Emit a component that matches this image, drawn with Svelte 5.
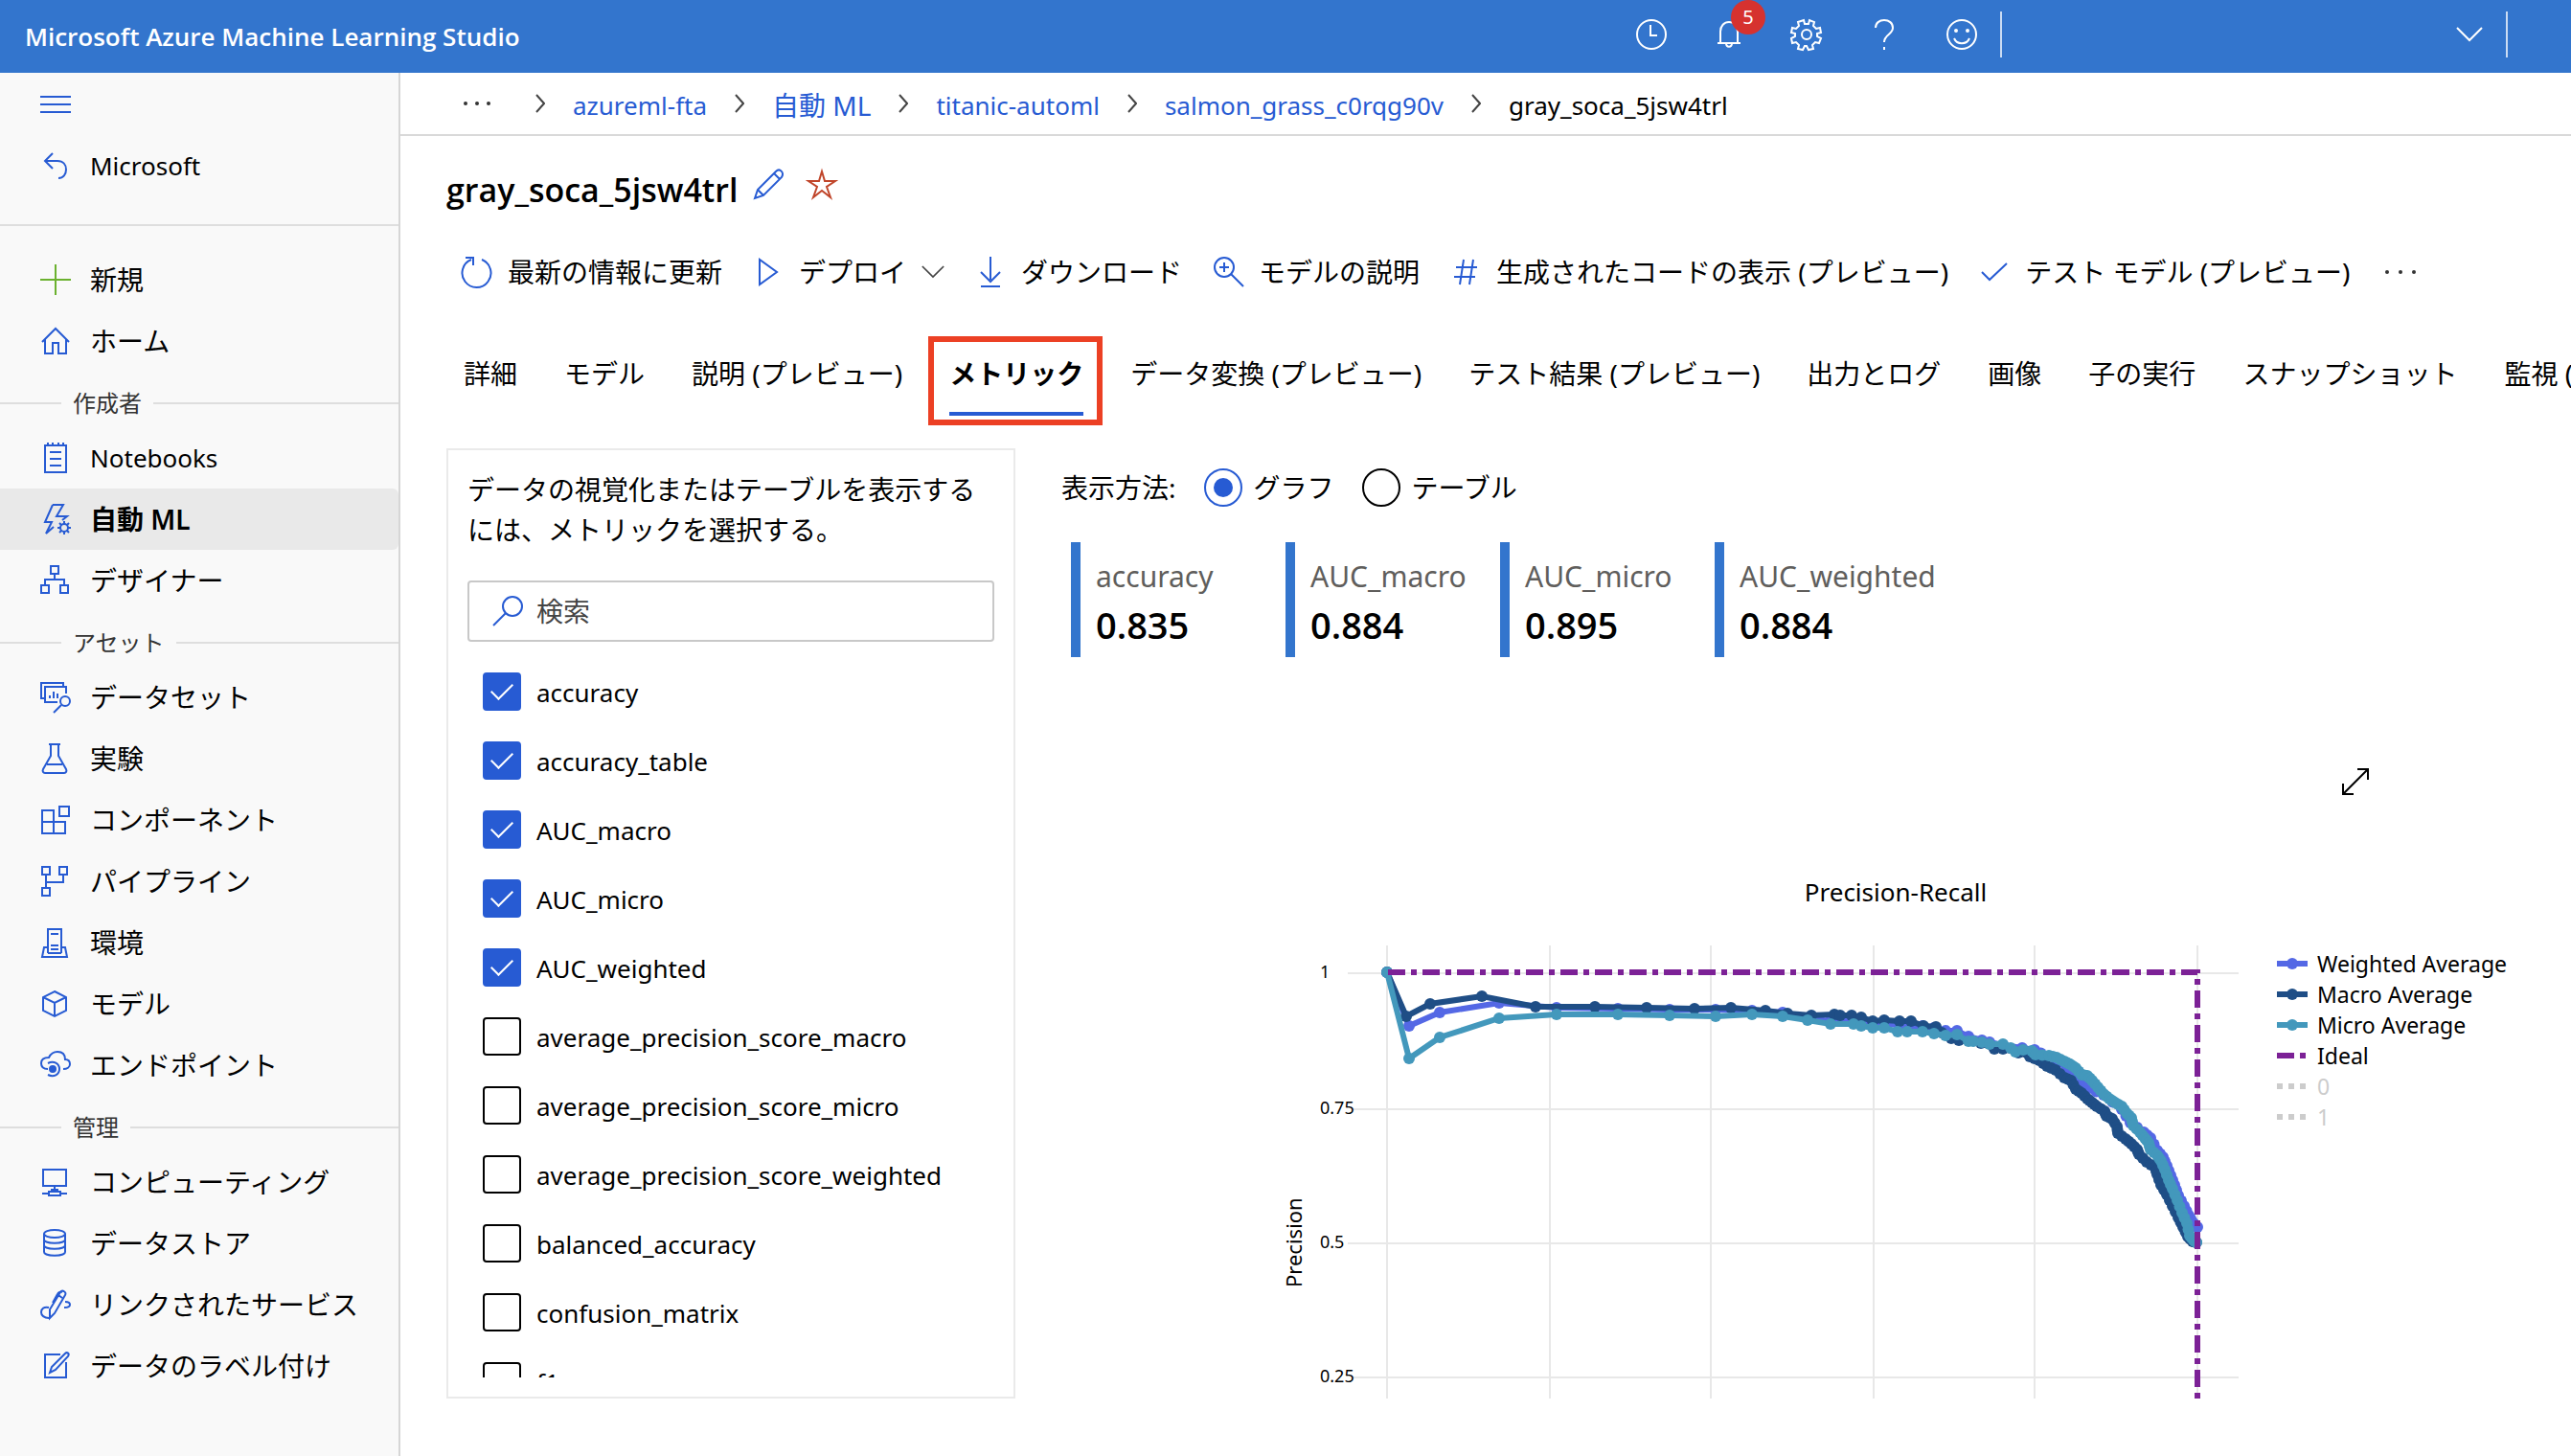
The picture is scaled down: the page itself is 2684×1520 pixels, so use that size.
<script lang="ts">
  type NavItem = { label: string; icon: string; latin?: boolean };

  const groups: { title?: string; items: NavItem[] }[] = [
    { items: [{ label: '新規', icon: 'plus' }, { label: 'ホーム', icon: 'home' }] },
    {
      title: '作成者',
      items: [
        { label: 'Notebooks', icon: 'notebook', latin: true },
        { label: '自動 ML', icon: 'automl' },
        { label: 'デザイナー', icon: 'designer' },
      ],
    },
    {
      title: 'アセット',
      items: [
        { label: 'データセット', icon: 'dataset' },
        { label: '実験', icon: 'flask' },
        { label: 'コンポーネント', icon: 'component' },
        { label: 'パイプライン', icon: 'pipeline' },
        { label: '環境', icon: 'environment' },
        { label: 'モデル', icon: 'cube' },
        { label: 'エンドポイント', icon: 'endpoint' },
      ],
    },
    {
      title: '管理',
      items: [
        { label: 'コンピューティング', icon: 'compute' },
        { label: 'データストア', icon: 'datastore' },
        { label: 'リンクされたサービス', icon: 'linked' },
        { label: 'データのラベル付け', icon: 'labeling' },
      ],
    },
  ];
  const current = '自動 ML';

  const crumbs = [
    { label: 'azureml-fta' },
    { label: '自動 ML', cjk: true },
    { label: 'titanic-automl' },
    { label: 'salmon_grass_c0rqg90v' },
  ];

  const commands = [
    { label: '最新の情報に更新', icon: 'refresh' },
    { label: 'デプロイ', icon: 'play', menu: true },
    { label: 'ダウンロード', icon: 'download' },
    { label: 'モデルの説明', icon: 'zoomin' },
    { label: '生成されたコードの表示 (プレビュー)', icon: 'hash' },
    { label: 'テスト モデル (プレビュー)', icon: 'check' },
  ];

  const tabs = [
    '詳細', 'モデル', '説明 (プレビュー)', 'メトリック', 'データ変換 (プレビュー)',
    'テスト結果 (プレビュー)', '出力とログ', '画像', '子の実行', 'スナップショット', '監視 (プレビュー)',
  ];
  const activeTab = 'メトリック';

  let metrics = $state([
    { name: 'accuracy', on: true },
    { name: 'accuracy_table', on: true },
    { name: 'AUC_macro', on: true },
    { name: 'AUC_micro', on: true },
    { name: 'AUC_weighted', on: true },
    { name: 'average_precision_score_macro', on: false },
    { name: 'average_precision_score_micro', on: false },
    { name: 'average_precision_score_weighted', on: false },
    { name: 'balanced_accuracy', on: false },
    { name: 'confusion_matrix', on: false },
    { name: 'f1_score_macro', on: false },
  ]);
  let view = $state('chart');

  const scores = [
    { name: 'accuracy', value: '0.835' },
    { name: 'AUC_macro', value: '0.884' },
    { name: 'AUC_micro', value: '0.895' },
    { name: 'AUC_weighted', value: '0.884' },
  ];

  const icons: Record<string, string> = {
    plus: '<path d="M16 0v32M0 16h32"/>',
    back: '<path d="M13 3 5 11l8 8M5 11h13c6 0 9 4 9 9s-3 9-8 9"/>',
    home: '<path d="M2 17 16 3l14 14M5 14v15h8V18h6v11h8V14"/>',
    notebook: '<path d="M5 3h22v28H5zM8 0v4M13 0v4M19 0v4M24 0v4M10 10h12M10 17h12M10 24h12"/>',
    automl: '<path d="M13 1h11l-7 12h11l-5 4M13 1 5 19h7L6 31l8-7"/><circle cx="25" cy="25" r="4"/><path d="M25 18v3M25 29v3M18 25h3M29 25h3M20 20l2 2M28 28l2 2M30 20l-2 2M22 28l-2 2"/>',
    designer: '<path d="M11 1h8v8h-8zM1 21h8v8H1zM21 21h8v8h-8zM15 9v6M5 21v-6h20v6"/>',
    dataset: '<path d="M24 4V1H1v16h3M18 21H5V5h22v7M10 17v-3M14 17v-7M18 17v-5"/><circle cx="26" cy="20" r="5"/><path d="m22 24-8 8"/>',
    flask: '<path d="M9 1h12M11 1v12L3 27c-1 2 0 4 2 4h20c2 0 3-2 2-4l-8-14V1M7 22h16"/>',
    component: '<path d="M2 6h12v24H2zM2 18h24v12H14M20 2h10v10H20z"/>',
    pipeline: '<path d="M2 1h8v8H2zM20 1h8v8h-8zM2 23h8v8H2zM6 9v14M6 17h18V9"/>',
    environment: '<path d="M8 27V2h14v25M11 7h8M11 19h8M11 23h8M8 21H4L2 31h26l-2-10h-4M8 27h14"/>',
    cube: '<path d="m15 3 12 6v14l-12 6-12-6V9zM3 9l12 6 12-6M15 15v14"/>',
    endpoint: '<path d="M8 20C4 20 1 18 1 14s3-6 8-6c2-4 5-6 9-6 5 0 8 3 8 8 3 0 5 2 5 5s-3 5-7 5"/><path d="M8 14c6-3 12 0 12 6s-6 9-12 6"/><circle cx="13" cy="20" r="3" class="solid"/>',
    compute: '<path d="M3 3h24v17H3zM15 20v5M2 28h7M21 28h7M9 26h12v4H9zM12 26v-2h6v2"/>',
    datastore: '<ellipse cx="15" cy="6" rx="11" ry="4"/><path d="M4 6v19c0 5 22 5 22 0V6M4 12c0 5 22 5 22 0M4 18c0 5 22 5 22 0"/>',
    linked: '<path d="M10 21 21 3c2-3 7 0 5 3L15 25l-5 5zM19 6l4 3M13 14l5-9c1-2 3-3 5-2M9 19c-5-1-8 1-8 5 0 3 3 6 8 6M26 13c4 0 5 2 5 3s-1 3-6 3"/>',
    labeling: '<path d="M21 4H5v24h22V12M10 23l2-6L26 3c2-2 5 0 3 3L16 20z"/>',
    refresh: '<path d="M21 3a15 15 0 1 1-11 0M4 1h8v8"/>',
    play: '<path d="M7 3v26l18-13z"/>',
    download: '<path d="M16 0v24M6 16l10 10 10-10M6 31h20"/>',
    zoomin: '<circle cx="12" cy="11" r="10"/><path d="m19 18 13 13M12 6v10M7 11h10"/>',
    hash: '<path d="m14 3-4 26M24 3l-4 26M6 11h22M4 21h22"/>',
    check: '<path d="m3 16 8 8L29 7"/>',
    pencil: '<path d="M1 31l3-9L23 3c4-4 9 1 6 6L10 28zM4 22l6 6M21 5l6 6"/>',
    star: '<path d="m16 3 3 10h11l-9 6 4 11-9-7-9 7 4-11-9-6h11z"/>',
    search: '<circle cx="21" cy="11" r="10"/><path d="M14 18 1 31"/>',
    clock: '<circle cx="16" cy="16" r="15"/><path d="M15 6v11h7"/>',
    bell: '<path d="M4 25h24M7 25V13c0-6 4-10 9-10s9 4 9 10v12M13 25c0 5 6 5 6 0"/>',
    gear: '<circle cx="16" cy="16" r="5"/><path d="m13 1 1 4h4l1-4 5 2-1 4 3 3 4-1 1 5-4 1v3l4 2-2 5-4-1-3 3 1 4-5 1-2-4h-2l-2 4-5-1 1-4-3-3-4 1-1-5 4-2v-3l-4-1 1-5 4 1 3-3-1-4z"/>',
    help: '<path d="M7 9c0-5 4-8 9-8s9 3 9 8c0 7-9 7-9 15M16 29v3"/>',
    smile: '<circle cx="16" cy="16" r="15"/><path d="M8 20c3 7 13 7 16 0"/><circle cx="10" cy="12" r="1" class="solid"/><circle cx="22" cy="12" r="1" class="solid"/>',
    expand: '<path d="M3 29 29 3M18 3h11v11M3 18v11h11"/>',
  };

  const topIcons = [
    { icon: 'clock', label: '履歴' },
    { icon: 'bell', label: '通知', badge: '5' },
    { icon: 'gear', label: '設定' },
    { icon: 'help', label: 'ヘルプ' },
    { icon: 'smile', label: 'フィードバック' },
  ];

  // Curve vertices in plot units; the plot origin (recall 0, precision 1) is 118,35.
  type Point = [number, number];
  const weighted: Point[] = [
    [0,0],[23,56],[55,42],[117,32],[177,37],[241,38],[295,39],[343,39],[381,40],[413,42],[439,48],[463,51],[487,51],[519,53],[543,57],[559,56],[571,58],[583,61],[595,61],[607,67],[621,71],[629,73],[643,76],[663,79],[676,81],[689,88],[710,100],[723,112],[733,121],[748,128],[767,143],[776,157],[790,167],[797,173],[804,186],[810,193],[814,202],[818,212],[822,222],[826,233],[832,244],[837,254],[841,261],[846,266],
  ];
  const macro: Point[] = [
    [0,0],[20,46],[45,33],[99,25],[155,36],[217,36],[271,37],[321,38],[359,37],[395,40],[418,43],[443,45],[467,44],[473,45],[485,45],[495,47],[507,51],[519,50],[535,51],[547,51],[560,56],[573,57],[579,63],[589,69],[597,71],[620,74],[634,80],[643,80],[659,84],[671,88],[681,92],[689,98],[698,102],[707,110],[714,113],[719,122],[725,126],[731,132],[736,136],[741,140],[749,145],[751,150],[757,153],[762,161],[763,168],[771,174],[777,179],[783,185],[785,190],[793,198],[802,204],[804,211],[808,222],[814,232],[820,244],[826,256],[831,266],[836,276],[841,281],[845,282],
  ];
  const micro: Point[] = [
    [0,0],[23,90],[55,68],[117,48],[177,44],[241,44],[295,45],[343,46],[381,44],[413,46],[439,50],[463,54],[487,54],[495,56],[507,58],[519,58],[533,62],[543,62],[559,62],[571,64],[583,66],[595,65],[607,72],[612,72],[621,73],[629,75],[643,75],[651,79],[656,83],[664,81],[673,82],[677,86],[691,87],[699,89],[707,93],[713,96],[719,100],[725,107],[731,108],[736,113],[742,120],[748,127],[754,132],[760,136],[767,140],[772,147],[777,152],[779,160],[786,167],[791,173],[795,178],[797,185],[804,191],[808,197],[812,206],[816,217],[820,226],[825,238],[830,251],[835,262],[838,275],[842,280],[845,282],
  ];
  // Past this recall position the samples are twice as dense.
  const denseFrom = 670;
  const densify = (points: Point[]): Point[] =>
    points.flatMap(([x, y], i) => {
      const next = points[i + 1];
      if (!next || x < denseFrom) return [[x, y]] as Point[];
      return [[x, y], [(x + next[0]) / 2, (y + next[1]) / 2]] as Point[];
    });
  const series = [
    { name: 'Weighted Average', cls: 'weighted', points: densify(weighted) },
    { name: 'Macro Average', cls: 'macro', points: densify(macro) },
    { name: 'Micro Average', cls: 'micro', points: densify(micro) },
  ];
  const columns = [118, 288, 456, 626, 794, 964];
  const ticks = [
    { y: 36, label: '1' },
    { y: 178, label: '0.75' },
    { y: 318, label: '0.5' },
    { y: 458, label: '0.25' },
  ];
  const toLine = (p: Point[]) => p.map(([x, y]) => `${x + 118},${y + 35}`).join(' ');
</script>

{#snippet icon(name: string)}
  <svg class="icon" viewBox="0 0 32 32" aria-hidden="true">{@html icons[name]}</svg>
{/snippet}

<div class="app">
  <header class="topbar">
    <div class="brand">Microsoft Azure Machine Learning Studio</div>
    <div class="actions">
      {#each topIcons as t}
        <button class="action" aria-label={t.label}>
          {@render icon(t.icon)}
          {#if t.badge}<span class="badge">{t.badge}</span>{/if}
        </button>
      {/each}
    </div>
    <button class="account" aria-label="ワークスペース">
      <svg class="chev-down" viewBox="0 0 28 16" aria-hidden="true"><path d="m1 1 13 13L27 1" /></svg>
    </button>
    <div class="corner"></div>
  </header>

  <div class="body">
    <nav class="sidebar">
      <button class="burger" aria-label="メニュー"><span></span><span></span><span></span></button>
      <a class="nav latin" href="#back">{@render icon('back')}Microsoft</a>
      <hr />
      {#each groups as g}
        {#if g.title}<div class="section"><span>{g.title}</span></div>{/if}
        {#each g.items as item}
          <a
            class="nav {item.icon}"
            class:latin={item.latin}
            class:current={item.label === current}
            href="#{item.icon}">{@render icon(item.icon)}{item.label}</a>
        {/each}
      {/each}
    </nav>

    <main>
      <nav class="crumbs">
        <button class="dots" aria-label="その他"><i></i><i></i><i></i></button>
        {#each crumbs as c}
          <svg class="chev-right" viewBox="0 0 10 20" aria-hidden="true"><path d="m1 1 8 9-8 9" /></svg>
          <a class:cjk={c.cjk} href="#{c.label}">{c.label}</a>
        {/each}
        <svg class="chev-right" viewBox="0 0 10 20" aria-hidden="true"><path d="m1 1 8 9-8 9" /></svg>
        <span>gray_soca_5jsw4trl</span>
      </nav>

      <div class="heading">
        <h1>gray_soca_5jsw4trl</h1>
        <button class="edit" aria-label="編集">{@render icon('pencil')}</button>
        <button class="fav" aria-label="お気に入り">{@render icon('star')}</button>
      </div>

      <div class="commands">
        {#each commands as c}
          <button class="command">
            {@render icon(c.icon)}<span>{c.label}</span>
            {#if c.menu}
              <svg class="chev-menu" viewBox="0 0 28 16" aria-hidden="true"><path d="m1 1 13 13L27 1" /></svg>
            {/if}
          </button>
        {/each}
        <button class="dots" aria-label="その他のコマンド"><i></i><i></i><i></i></button>
      </div>

      <div class="tabs" role="tablist">
        {#each tabs as t}
          <button role="tab" class="tab" class:active={t === activeTab} aria-selected={t === activeTab}>{t}</button>
        {/each}
      </div>

      <div class="content">
        <section class="panel">
          <p>データの視覚化またはテーブルを表示するには、メトリックを選択する。</p>
          <label class="search">
            {@render icon('search')}
            <input type="text" placeholder="検索" aria-label="検索" />
          </label>
          <div class="list">
            {#each metrics as m}
              <label class="metric"><input type="checkbox" bind:checked={m.on} /><span>{m.name}</span></label>
            {/each}
          </div>
        </section>

        <section class="results">
          <div class="views" role="radiogroup" aria-label="表示方法">
            <span>表示方法:</span>
            <label><input type="radio" name="view" value="chart" bind:group={view} />グラフ</label>
            <label><input type="radio" name="view" value="table" bind:group={view} />テーブル</label>
          </div>

          <div class="scores">
            {#each scores as s}
              <div class="score"><span>{s.name}</span><strong>{s.value}</strong></div>
            {/each}
          </div>

          <figure>
            <button class="expand" aria-label="拡大">{@render icon('expand')}</button>
            <figcaption>Precision-Recall</figcaption>
            <div class="chart">
              <svg class="plot" viewBox="0 0 1010 480" role="img" aria-label="Precision-Recall">
                {#each columns as x}<path class="grid" d="M{x} 7V480" />{/each}
                {#each ticks as t}
                  <path class="grid" d="M{t.label.length > 3 ? 82 : 77} {t.y}H1007" />
                  <text class="tick" x="48" y={t.y + 5}>{t.label}</text>
                {/each}
                <text class="axis" transform="translate(29 364) rotate(-90)">Precision</text>
                {#each series as s}
                  <g class={s.cls}>
                    <polyline points={toLine(s.points)} />
                    {#each s.points as [x, y]}<circle cx={x + 118} cy={y + 35} r="6" />{/each}
                  </g>
                {/each}
                <path class="ideal" d="M119 35H964V480" />
              </svg>
              <ul class="legend">
                {#each series as s}
                  <li class={s.cls}>
                    <svg viewBox="0 0 32 16" aria-hidden="true"><path d="M0 8h32" /><circle cx="16" cy="8" r="6" /></svg>{s.name}
                  </li>
                {/each}
                <li><svg viewBox="0 0 32 16" aria-hidden="true"><path class="ideal" d="M0 8h32" /></svg>Ideal</li>
                <li class="off"><svg viewBox="0 0 32 16" aria-hidden="true"><path d="M0 8h32" /></svg>0</li>
                <li class="off"><svg viewBox="0 0 32 16" aria-hidden="true"><path d="M0 8h32" /></svg>1</li>
              </ul>
            </div>
          </figure>
        </section>
      </div>
    </main>
  </div>
</div>

<style>
  :global(body) {
    margin: 0;
    background: #fff;
  }
  .app {
    --blue: #275bd3;
    --bar: #3375cd;
    display: flex;
    flex-direction: column;
    height: 100vh;
    overflow: hidden;
    color: #000;
    font-family: 'Noto Sans', 'Noto Sans CJK JP', sans-serif;
    font-size: 28px;
    line-height: 42px;
  }
  .app * {
    box-sizing: border-box;
  }
  button {
    display: flex;
    align-items: center;
    padding: 0;
    border: 0;
    background: none;
    color: inherit;
    font: inherit;
    white-space: nowrap;
    flex: none;
  }
  a {
    color: inherit;
    text-decoration: none;
  }
  svg {
    fill: none;
    stroke: currentColor;
    stroke-width: 2;
    flex: none;
  }
  .icon {
    width: 32px;
    height: 32px;
    color: var(--blue);
    overflow: visible;
  }
  .icon :global(.solid) {
    fill: currentColor;
  }

  .topbar {
    display: flex;
    flex: none;
    align-items: center;
    height: 76px;
    padding: 0 0 4px 26px;
    background: var(--bar);
    color: #fff;
  }
  .topbar .icon {
    color: #fff;
  }
  .brand {
    flex: 1;
    padding-top: 4px;
    font-family: 'Open Sans', sans-serif;
    font-size: 26px;
    font-weight: 600;
  }
  .actions {
    display: flex;
  }
  .action {
    position: relative;
    justify-content: center;
    width: 81px;
    height: 72px;
  }
  .badge {
    position: absolute;
    top: 0;
    left: 43px;
    width: 36px;
    height: 36px;
    border-radius: 50%;
    background: #d6322f;
    font-size: 20px;
    line-height: 36px;
    text-align: center;
  }
  .account {
    justify-content: flex-end;
    width: 530px;
    height: 48px;
    padding-right: 24px;
    border: solid rgb(255 255 255 / 75%);
    border-width: 0 2px;
  }
  .chev-down {
    width: 28px;
    height: 16px;
  }
  .corner {
    width: 66px;
  }

  .body {
    display: flex;
    flex: 1;
    min-height: 0;
  }
  .sidebar {
    flex: none;
    width: 418px;
    padding-top: 17px;
    border-right: 2px solid #d6d6d6;
    background: #f9f9f9;
  }
  .burger {
    flex-direction: column;
    gap: 6px;
    width: 116px;
    height: 48px;
    padding-top: 7px;
  }
  .burger span {
    width: 32px;
    height: 2px;
    background: var(--blue);
  }
  .sidebar hr {
    height: 2px;
    margin: 29px 0 24px;
    border: 0;
    background: #dedede;
  }
  .nav {
    display: flex;
    align-items: center;
    gap: 20px;
    height: 64px;
    padding-left: 42px;
    white-space: nowrap;
  }
  .latin {
    font-size: 26px;
  }
  .nav.current {
    border-radius: 0 6px 6px 0;
    background: #e9e9e9;
    font-weight: 600;
  }
  .plus .icon {
    color: #6bb12f;
  }
  .section {
    display: flex;
    align-items: center;
    gap: 12px;
    height: 50px;
    margin-top: 8px;
    color: #333;
    font-size: 24px;
  }
  .section::before,
  .section::after {
    content: '';
    height: 2px;
    background: #dedede;
  }
  .section::before {
    width: 64px;
  }
  .section::after {
    flex: 1;
  }

  main {
    display: flex;
    flex: 1;
    flex-direction: column;
    min-width: 0;
    background: #fff;
  }
  .crumbs {
    display: flex;
    flex: none;
    align-items: center;
    gap: 29px;
    height: 66px;
    padding-left: 66px;
    border-bottom: 2px solid #d9d9d9;
    font-size: 26px;
  }
  .crumbs a,
  .crumbs span {
    padding-top: 4px;
  }
  .crumbs a {
    color: var(--blue);
  }
  .crumbs .cjk {
    font-size: 28px;
  }
  .chev-right {
    width: 10px;
    height: 20px;
    color: #444;
  }
  .dots {
    justify-content: space-between;
    width: 28px;
    height: 32px;
  }
  .dots i {
    width: 4px;
    height: 4px;
    border-radius: 50%;
    background: #333;
  }
  .crumbs .dots {
    margin-right: 18px;
  }
  .heading {
    display: flex;
    align-items: center;
    height: 64px;
    margin-top: 24px;
    padding-left: 48px;
  }
  h1 {
    margin: 0;
    font-family: 'Open Sans', sans-serif;
    font-size: 34px;
    font-weight: 600;
  }
  .heading button {
    padding-bottom: 12px;
  }
  .edit {
    margin: 0 23px 0 17px;
  }
  .fav .icon {
    color: #c0452a;
  }
  .commands {
    display: flex;
    align-items: center;
    gap: 32px;
    height: 64px;
    margin-top: 22px;
    padding-left: 64px;
  }
  .command {
    gap: 16px;
  }
  .commands .dots {
    margin-left: 4px;
    width: 32px;
  }
  .chev-menu {
    width: 24px;
    height: 14px;
    color: #444;
  }
  .tabs {
    display: flex;
    flex: none;
    gap: 49px;
    height: 88px;
    margin-top: 30px;
    padding-left: 66px;
    overflow-x: clip;
  }
  .tab {
    position: relative;
  }
  .tab.active {
    border-bottom: 4px solid var(--blue);
    padding-top: 4px;
    font-weight: 700;
  }
  .tab.active::after {
    content: '';
    position: absolute;
    inset: 5px -20px -14px -22px;
    border: 6px solid #ec4024;
  }

  .content {
    display: flex;
    flex: 1;
    min-height: 0;
    gap: 48px;
    margin-top: 34px;
    padding: 0 42px 60px 48px;
  }
  .panel {
    display: flex;
    flex: none;
    flex-direction: column;
    width: 594px;
    padding: 20px;
    border: 2px solid #eaeaea;
  }
  .panel p {
    margin: 0 0 32px;
  }
  .search {
    display: flex;
    flex: none;
    align-items: center;
    gap: 14px;
    height: 64px;
    padding-left: 24px;
    border: 2px solid #c8c8c8;
    border-radius: 4px;
  }
  .search input {
    flex: 1;
    padding: 0;
    border: 0;
    outline: 0;
    font: inherit;
  }
  .search input::placeholder {
    color: #444;
    opacity: 1;
  }
  .list {
    flex: 1;
    min-height: 0;
    margin-top: 16px;
    overflow: hidden;
  }
  .metric {
    display: flex;
    align-items: center;
    gap: 16px;
    height: 72px;
    padding-left: 16px;
    font-size: 26px;
  }
  .metric span {
    padding-top: 2px;
  }
  .metric input {
    display: grid;
    place-items: center;
    appearance: none;
    width: 40px;
    height: 40px;
    margin: 0;
    border: 2px solid #000;
    border-radius: 4px;
  }
  .metric input:checked {
    border-color: var(--blue);
    background: var(--blue);
  }
  .metric input:checked::before {
    content: '';
    width: 20px;
    height: 10px;
    margin-bottom: 6px;
    border: solid #fff;
    border-width: 0 0 2px 2px;
    rotate: -45deg;
  }

  .results {
    flex: 1;
    min-width: 0;
    display: flex;
    flex-direction: column;
  }
  .views {
    display: flex;
    align-items: center;
    gap: 29px;
    margin-top: 20px;
  }
  .views label {
    display: flex;
    align-items: center;
    gap: 12px;
  }
  .views input {
    display: grid;
    place-items: center;
    appearance: none;
    width: 40px;
    height: 40px;
    margin: 0;
    border: 2px solid #000;
    border-radius: 50%;
  }
  .views input:checked {
    border-color: var(--blue);
  }
  .views input:checked::before {
    content: '';
    width: 20px;
    height: 20px;
    border-radius: 50%;
    background: var(--blue);
  }
  .scores {
    display: flex;
    margin: 36px 0 0 10px;
  }
  .score {
    display: flex;
    flex-direction: column;
    justify-content: center;
    gap: 8px;
    width: 224px;
    height: 120px;
    padding: 2px 0 0 16px;
    border-left: 10px solid var(--bar);
    color: #605e5c;
    font-size: 30px;
    white-space: nowrap;
  }
  .score strong {
    color: #000;
    font-family: 'Open Sans', sans-serif;
    font-size: 38px;
    font-weight: 600;
  }
  figure {
    display: flex;
    flex: 1;
    flex-direction: column;
    min-height: 0;
    margin: 114px 0 0 208px;
  }
  .expand {
    align-self: flex-end;
    margin-right: 167px;
  }
  .expand .icon {
    color: #000;
  }
  figcaption {
    margin-top: 78px;
    font-size: 26px;
    text-align: center;
  }
  .chart {
    display: flex;
    flex: none;
    gap: 37px;
    margin: 28px 0 0 14px;
  }
  .plot {
    width: 1010px;
    height: 480px;
  }
  .grid {
    stroke: #e8e8e8;
  }
  text {
    fill: #000;
    stroke: none;
  }
  .tick {
    font-size: 18px;
  }
  .axis {
    font-size: 22px;
  }
  polyline,
  .legend path {
    stroke-width: 6;
  }
  circle {
    stroke: none;
    fill: currentColor;
  }
  .weighted {
    color: #5468e5;
  }
  .macro {
    color: #1f4e86;
  }
  .micro {
    color: #4398bc;
  }
  .ideal {
    stroke: #7c2196;
    stroke-width: 6;
    stroke-dasharray: 18 6 6 6;
  }
  .legend {
    margin: 10px 0 0;
    padding: 0;
    list-style: none;
    font-size: 23px;
    line-height: 32px;
  }
  .legend li {
    display: flex;
    align-items: center;
    gap: 10px;
    color: #000;
    white-space: nowrap;
  }
  .legend svg {
    width: 32px;
    height: 16px;
  }
  .legend .weighted svg {
    color: #5468e5;
  }
  .legend .macro svg {
    color: #1f4e86;
  }
  .legend .micro svg {
    color: #4398bc;
  }
  .legend .off {
    color: #ccc;
  }
  .legend .off path {
    stroke-dasharray: 6;
  }
</style>
